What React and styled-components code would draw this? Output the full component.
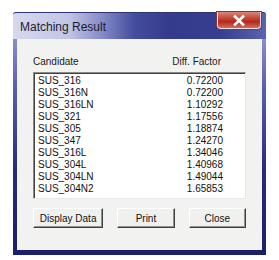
import React from "react";
import styled, { createGlobalStyle } from "styled-components";

const GlobalStyle = createGlobalStyle`
  body {
    margin: 0;
    background: #ffffff;
    font-family: "Liberation Sans", Arial, sans-serif;
  }
`;

const ROWS = [
  ["SUS_316", "0.72200"],
  ["SUS_316N", "0.72200"],
  ["SUS_316LN", "1.10292"],
  ["SUS_321", "1.17556"],
  ["SUS_305", "1.18874"],
  ["SUS_347", "1.24270"],
  ["SUS_316L", "1.34046"],
  ["SUS_304L", "1.40968"],
  ["SUS_304LN", "1.49044"],
  ["SUS_304N2", "1.65853"],
];

const Window = styled.div`
  margin: 12px 0 0 13px;
  width: 253px;
  height: 243px;
  box-sizing: border-box;
  display: flex;
  flex-direction: column;
  padding: 0 4px 5px;
  border-radius: 3px 3px 0 0;
  background: linear-gradient(to bottom, #a4a9d8 0%, #5b62ad 30%, #252c7c 65%, #1a2068 100%);
`;

const TitleBar = styled.div`
  height: 27px;
  margin: 0 -4px;
  display: flex;
  align-items: flex-start;
  justify-content: space-between;
  border-top: 1px solid #2f3478;
  border-radius: 3px 3px 0 0;
  box-sizing: border-box;
  background: linear-gradient(
    to right,
    #d6d8ee 0%,
    #c2c5e5 22%,
    #8087c4 36%,
    #444c9e 48%,
    #343b8c 62%,
    #363e8f 82%,
    #5c64b0 100%
  );
`;

const Title = styled.span`
  margin: 7px 0 0 7px;
  font-size: 12px;
  line-height: 14px;
  color: #1c1c30;
`;

const CloseButton = styled.div`
  width: 44px;
  height: 17px;
  margin: -1px 5px 0 0;
  box-sizing: border-box;
  border: 1px solid #f2e2e0;
  border-top: none;
  border-radius: 0 0 4px 4px;
  display: flex;
  align-items: center;
  justify-content: center;
  background: linear-gradient(to bottom, #d9867a 0%, #c4473a 40%, #b3281b 60%, #d26b5f 100%);
  box-shadow: 0 0 0 1px #7a3a44;
`;

const Client = styled.div`
  flex: 1;
  background: #f2f2f0;
  padding: 17px 16px 0;
  display: flex;
  flex-direction: column;
`;

const HeaderRow = styled.div`
  display: flex;
  justify-content: space-between;
  font-size: 10px;
  line-height: 12px;
  color: #1a1a1a;
  padding: 0 25px 0 0;
  height: 16px;
`;

const ListBox = styled.div`
  height: 127px;
  box-sizing: border-box;
  background: #ffffff;
  border: 1px solid;
  border-color: #8a8a8a #e8e8e8 #e8e8e8 #8a8a8a;
  box-shadow: inset 1px 1px 0 #404040;
  padding: 2px 22px 0 4px;
`;

const Row = styled.div`
  display: flex;
  justify-content: space-between;
  font-size: 10px;
  line-height: 12px;
  height: 12px;
  color: #111111;
`;

const ButtonRow = styled.div`
  display: flex;
  gap: 14px;
  margin-top: 9px;
`;

const Button = styled.div`
  width: ${({ w }) => w}px;
  height: 20px;
  box-sizing: border-box;
  display: flex;
  align-items: center;
  justify-content: center;
  font-size: 10px;
  color: #111111;
  background: #f0f0ee;
  border: 1px solid;
  border-color: #ffffff #404040 #404040 #ffffff;
  box-shadow: inset -1px -1px 0 #909090;
`;

const App = () => (
  <>
    <GlobalStyle />
    <Window>
      <TitleBar>
        <Title>Matching Result</Title>
        <CloseButton>
          <svg width="14" height="11" viewBox="0 0 14 11">
            <path d="M3 1.5 L11 9.5 M11 1.5 L3 9.5" stroke="#ffffff" strokeWidth="2.6" strokeLinecap="square" />
          </svg>
        </CloseButton>
      </TitleBar>
      <Client>
        <HeaderRow>
          <span>Candidate</span>
          <span>Diff. Factor</span>
        </HeaderRow>
        <ListBox>
          {ROWS.map(([name, value]) => (
            <Row key={name}>
              <span>{name}</span>
              <span>{value}</span>
            </Row>
          ))}
        </ListBox>
        <ButtonRow>
          <Button w={71}>Display Data</Button>
          <Button w={58}>Print</Button>
          <Button w={58}>Close</Button>
        </ButtonRow>
      </Client>
    </Window>
  </>
);

export default App;
